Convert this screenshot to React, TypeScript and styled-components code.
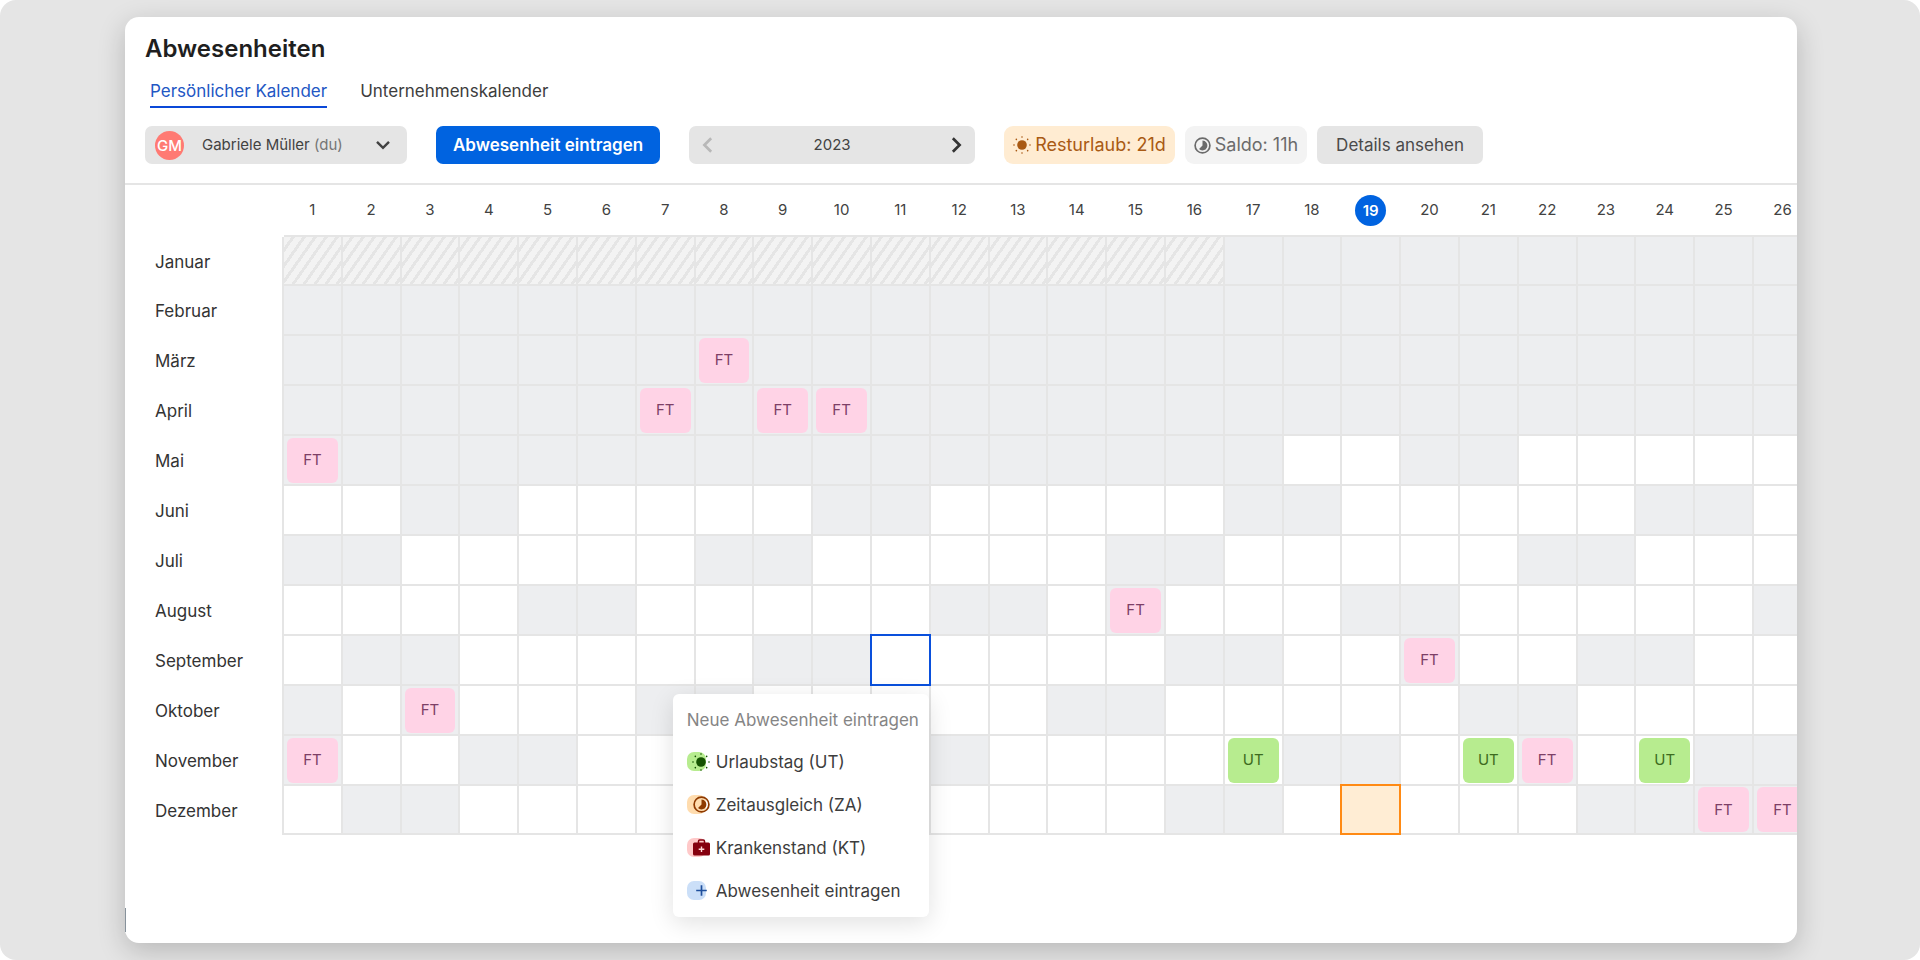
import React from "react";
import styled, { createGlobalStyle, css } from "styled-components";

const GlobalStyle = createGlobalStyle`
  *, *::before, *::after { box-sizing: border-box; }
  body {
    margin: 0;
    background: #fff;
    color: #424242;
    font-family: Inter, "Liberation Sans", sans-serif;
    font-size: 17px;
    line-height: 24px;
  }
  button, select { font: inherit; color: inherit; border: 0; background: none; margin: 0; padding: 0; }
  button:not(:disabled), select { cursor: pointer; }
`;

const Page = styled.div`
  display: flex;
  min-height: 100vh;
  padding: 17px 123px 17px 125px;
  background: #e5e5e5;
  border-radius: 16px;
`;

const Card = styled.main`
  position: relative;
  flex: 1;
  min-width: 0;
  display: flex;
  flex-direction: column;
  background: #fff;
  border-radius: 14px;
  box-shadow: 0 8px 28px rgba(0, 0, 0, 0.2);

  &::after {
    content: "";
    position: absolute;
    left: 0;
    bottom: 11px;
    width: 1px;
    height: 24px;
    background: #87929b;
  }
`;

const Header = styled.header`
  padding: 16px 20px 19px;
  border-bottom: 2px solid #e5e5e5;
`;

const Title = styled.h1`
  margin: 0;
  font-size: 24px;
  line-height: 32px;
  font-weight: 600;
  color: #1f1f1f;
`;

const Tabs = styled.nav`
  display: flex;
  gap: 33px;
  margin-top: 12px;
  padding: 0 5px;
`;

const Tab = styled.a<{ $active?: boolean }>`
  padding: 2px 0 3px;
  border-bottom: 2px solid ${(p) => (p.$active ? "#0a48d8" : "transparent")};
  color: ${(p) => (p.$active ? "#2257c4" : "#3d3d3d")};
  text-decoration: none;
`;

const Toolbar = styled.div`
  display: flex;
  align-items: center;
  gap: 29px;
  margin-top: 18px;
  white-space: nowrap;
`;

const PersonField = styled.label`
  display: flex;
  align-items: center;
  width: 262px;
  height: 38px;
  padding: 0 16px 0 10px;
  border-radius: 7px;
  background: #e5e5e5;
  font-size: 15px;
`;

const Avatar = styled.span`
  width: 29px;
  height: 29px;
  margin-right: 18px;
  border-radius: 50%;
  background: #ff7a73;
  color: #fff;
  font-weight: 500;
  line-height: 29px;
  text-align: center;
`;

const PersonSelect = styled.select`
  appearance: none;
  outline: none;
`;

const Suffix = styled.span`
  flex: 1;
  margin-left: 4px;
  color: #757575;
`;

const PrimaryButton = styled.button`
  height: 38px;
  padding: 0 17px;
  border-radius: 7px;
  background: #0063e0;
  color: #fff;
  font-weight: 600;
`;

const YearStepper = styled.div`
  display: flex;
  align-items: center;
  justify-content: space-between;
  width: 286px;
  height: 38px;
  padding: 0 10px;
  border-radius: 7px;
  background: #e5e5e5;
  font-size: 15px;
`;

const StepButton = styled.button`
  display: flex;
  color: #333;
  &:disabled { color: #b8b8b8; }
`;

const Summary = styled.div`
  display: flex;
  gap: 10px;
`;

const Badge = styled.span<{ $tone: "orange" | "grey" }>`
  display: flex;
  align-items: center;
  gap: 4px;
  height: 38px;
  padding: 0 9px;
  border-radius: 9px;
  font-size: 18px;
  ${(p) =>
    p.$tone === "orange"
      ? css`background: #ffecd2; color: #a95a14;`
      : css`background: #f3f3f3; color: #6b6b6b;`}
`;

const SecondaryButton = styled.button`
  height: 38px;
  padding: 0 19px;
  border-radius: 7px;
  background: #e5e5e5;
  color: #4a4a4a;
`;

const Viewport = styled.section`
  flex: 1;
  overflow: hidden;
  border-radius: 0 0 14px 14px;
`;

const Calendar = styled.table`
  width: calc(100% + 16px);
  table-layout: fixed;
  border-collapse: separate;
  border-spacing: 0;
`;

const CornerCell = styled.td`
  width: 159px;
  padding: 0;
`;

const DayHead = styled.th`
  height: 52px;
  padding: 0 2px 0 0;
  border-bottom: 2px solid #e5e5e5;
  font-size: 15px;
  font-weight: 400;
  text-align: center;
  vertical-align: middle;
`;

const Today = styled.span`
  display: inline-block;
  width: 31px;
  height: 31px;
  border-radius: 50%;
  background: #0063e0;
  color: #fff;
  font-weight: 600;
  line-height: 31px;
`;

const MonthRow = styled.tr`
  height: 50px;
  &:first-child, &:last-child { height: 49px; }
`;

const MonthHead = styled.th`
  padding: 0 0 0 30px;
  border-right: 2px solid #e5e5e5;
  font-weight: 400;
  text-align: left;
  color: #333;
`;

type Fill = "open" | "off" | "hatched";

const fills: Record<Fill, string> = {
  open: "#fff",
  off: "#edeef0",
  hatched: "repeating-linear-gradient(125deg, #f3f3f3 0 6px, #e5e5e5 6px 9px)",
};

const DayCell = styled.td<{ $fill: Fill; $mark?: "selected" | "highlight" }>`
  position: relative;
  padding: 1px 3px;
  border: solid #e5e5e5;
  border-width: 0 2px 2px 0;
  background: ${(p) => fills[p.$fill]};
  background-clip: padding-box;

  ${(p) =>
    p.$mark &&
    css`
      &::before {
        content: "";
        position: absolute;
        inset: -2px;
        border: 2px solid ${p.$mark === "selected" ? "#0a50dc" : "#ff8a14"};
        background: ${p.$mark === "selected" ? "#fff" : "#ffedd4"};
      }
    `}
`;

const Chip = styled.button<{ $kind: "FT" | "UT" }>`
  display: block;
  width: 100%;
  height: 45px;
  border-radius: 6px;
  font-size: 15px;
  background: ${(p) => (p.$kind === "FT" ? "#ffd3e6" : "#b7ec8f")};
  color: ${(p) => (p.$kind === "FT" ? "#7d3f66" : "#3d6b20")};
`;

const Popup = styled.div`
  position: absolute;
  z-index: 2;
  top: calc(100% + 10px);
  right: 0;
  width: 256px;
  padding: 12px 14px 5px;
  border-radius: 6px;
  background: #fff;
  box-shadow: 0 6px 24px rgba(0, 0, 0, 0.12);
  white-space: nowrap;
`;

const PopupTitle = styled.p`
  margin: 0 0 6px;
  line-height: 28px;
  color: #858585;
`;

const MenuItem = styled.button`
  display: flex;
  align-items: center;
  gap: 6px;
  width: 100%;
  height: 43px;
  color: #3d3d3d;
`;

const MenuIcon = styled.span<{ $tint: string; $color: string }>`
  position: relative;
  display: flex;
  align-items: center;
  justify-content: flex-end;
  width: 23px;
  height: 19px;
  color: ${(p) => p.$color};

  &::before {
    content: "";
    position: absolute;
    inset: 0 auto 0 0;
    width: 19px;
    border-radius: 7px;
    background: ${(p) => p.$tint};
  }

  svg { position: relative; }
`;

const Chevron = ({ dir, size = 20 }: { dir: "down" | "left" | "right"; size?: number }) => (
  <svg width={size} height={size} viewBox="0 0 20 20" fill="none" stroke="currentColor" strokeWidth="3" aria-hidden>
    <path d={{ down: "M2.5 6 10 13.5 17.500 6", left: "M13.500 2.500 6 10l7.500 7.500", right: "M6.500 2.500 14 10l-7.500 7.500" }[dir]} />
  </svg>
);

const SunIcon = () => (
  <svg width="18" height="18" viewBox="0 0 18 18" fill="currentColor" aria-hidden>
    <circle cx="9" cy="9" r="4.800" />
    {[0, 45, 90, 135, 180, 225, 270, 315].map((a) => (
      <circle key={a} cx="9" cy="1" r="0.800" transform={`rotate(${a} 9 9)`} />
    ))}
  </svg>
);

const ClockIcon = () => (
  <svg width="17" height="17" viewBox="0 0 17 17" aria-hidden>
    <circle cx="8.5" cy="8.5" r="7.4" fill="none" stroke="currentColor" strokeWidth="1.7" />
    <path d="M8.5 3.6a4.9 4.9 0 1 1-3.5 8.4L8.5 8.5z" fill="currentColor" />
  </svg>
);

const MedkitIcon = () => (
  <svg width="17" height="17" viewBox="0 0 17 17" aria-hidden>
    <path d="M5.5 4V2.2C5.5 1.4 6 1 6.7 1h3.6c.7 0 1.2.4 1.2 1.2V4" fill="none" stroke="currentColor" strokeWidth="1.5" />
    <rect x="0" y="3.6" width="17" height="13" rx="1.5" fill="currentColor" />
    <path d="M8.5 7.5v5.500M5.700 10.200h5.600" stroke="#ffd6d6" strokeWidth="1.4" />
  </svg>
);

const PlusIcon = () => (
  <svg width="17" height="17" viewBox="0 0 17 17" fill="none" stroke="currentColor" strokeWidth="1.7" aria-hidden>
    <path d="M8.5 3.2v10.600M3.200 8.500h10.600" />
  </svg>
);

const DAYS = Array.from({ length: 26 }, (_, i) => i + 1);
const range = (from: number, to: number) => DAYS.filter((d) => d >= from && d <= to);

interface Month {
  name: string;
  off: number[];
  hatched?: number[];
  chips?: Record<number, "FT" | "UT">;
}

const MONTHS: Month[] = [
  { name: "Januar", off: range(17, 26), hatched: range(1, 16) },
  { name: "Februar", off: DAYS },
  { name: "März", off: DAYS, chips: { 8: "FT" } },
  { name: "April", off: DAYS, chips: { 7: "FT", 9: "FT", 10: "FT" } },
  { name: "Mai", off: [...range(1, 17), 20, 21], chips: { 1: "FT" } },
  { name: "Juni", off: [3, 4, 10, 11, 17, 18, 24, 25] },
  { name: "Juli", off: [1, 2, 8, 9, 15, 16, 22, 23] },
  { name: "August", off: [5, 6, 12, 13, 15, 19, 20, 26], chips: { 15: "FT" } },
  { name: "September", off: [2, 3, 9, 10, 16, 17, 20, 23, 24], chips: { 20: "FT" } },
  { name: "Oktober", off: [1, 3, 7, 8, 14, 15, 21, 22], chips: { 3: "FT" } },
  {
    name: "November",
    off: [1, 4, 5, 11, 12, 18, 19, 22, 25, 26],
    chips: { 1: "FT", 17: "UT", 21: "UT", 22: "FT", 24: "UT" },
  },
  { name: "Dezember", off: [2, 3, 9, 10, 16, 17, 23, 24, 25, 26], chips: { 25: "FT", 26: "FT" } },
];

const MENU = [
  { label: "Urlaubstag (UT)", tint: "#b7ec8f", color: "#145200", icon: <SunIcon /> },
  { label: "Zeitausgleich (ZA)", tint: "#ffdcae", color: "#8f3a00", icon: <ClockIcon /> },
  { label: "Krankenstand (KT)", tint: "#ffc9c9", color: "#85000f", icon: <MedkitIcon /> },
  { label: "Abwesenheit eintragen", tint: "#cbdff8", color: "#1f4f9c", icon: <PlusIcon /> },
];

const AbsenceMenu = () => (
  <Popup>
    <PopupTitle>Neue Abwesenheit eintragen</PopupTitle>
    {MENU.map((m) => (
      <MenuItem key={m.label} type="button">
        <MenuIcon $tint={m.tint} $color={m.color}>{m.icon}</MenuIcon>
        {m.label}
      </MenuItem>
    ))}
  </Popup>
);

const markOf = (month: string, day: number) => {
  if (month === "September" && day === 11) return "selected" as const;
  if (month === "Dezember" && day === 19) return "highlight" as const;
  return undefined;
};

export default function App() {
  return (
    <>
      <GlobalStyle />
      <Page>
        <Card>
          <Header>
            <Title>Abwesenheiten</Title>
            <Tabs>
              <Tab href="#persoenlich" $active aria-current="page">Persönlicher Kalender</Tab>
              <Tab href="#unternehmen">Unternehmenskalender</Tab>
            </Tabs>
            <Toolbar>
              <PersonField>
                <Avatar aria-hidden>GM</Avatar>
                <PersonSelect aria-label="Person">
                  <option>Gabriele Müller</option>
                </PersonSelect>
                <Suffix>(du)</Suffix>
                <Chevron dir="down" size={16} />
              </PersonField>
              <PrimaryButton type="button">Abwesenheit eintragen</PrimaryButton>
              <YearStepper>
                <StepButton type="button" aria-label="Vorheriges Jahr" disabled><Chevron dir="left" size={18} /></StepButton>
                2023
                <StepButton type="button" aria-label="Nächstes Jahr"><Chevron dir="right" size={18} /></StepButton>
              </YearStepper>
              <Summary>
                <Badge $tone="orange"><SunIcon />Resturlaub: 21d</Badge>
                <Badge $tone="grey"><ClockIcon />Saldo: 11h</Badge>
                <SecondaryButton type="button">Details ansehen</SecondaryButton>
              </Summary>
            </Toolbar>
          </Header>
          <Viewport>
            <Calendar>
              <thead>
                <tr>
                  <CornerCell />
                  {DAYS.map((d) => (
                    <DayHead key={d} scope="col">{d === 19 ? <Today>{d}</Today> : d}</DayHead>
                  ))}
                </tr>
              </thead>
              <tbody>
                {MONTHS.map((m) => (
                  <MonthRow key={m.name}>
                    <MonthHead scope="row">{m.name}</MonthHead>
                    {DAYS.map((d) => {
                      const mark = markOf(m.name, d);
                      const kind = m.chips?.[d];
                      const fill: Fill = m.hatched?.includes(d) ? "hatched" : m.off.includes(d) ? "off" : "open";
                      return (
                        <DayCell key={d} $fill={fill} $mark={mark}>
                          {kind && <Chip type="button" $kind={kind}>{kind}</Chip>}
                          {mark === "selected" && <AbsenceMenu />}
                        </DayCell>
                      );
                    })}
                  </MonthRow>
                ))}
              </tbody>
            </Calendar>
          </Viewport>
        </Card>
      </Page>
    </>
  );
}
